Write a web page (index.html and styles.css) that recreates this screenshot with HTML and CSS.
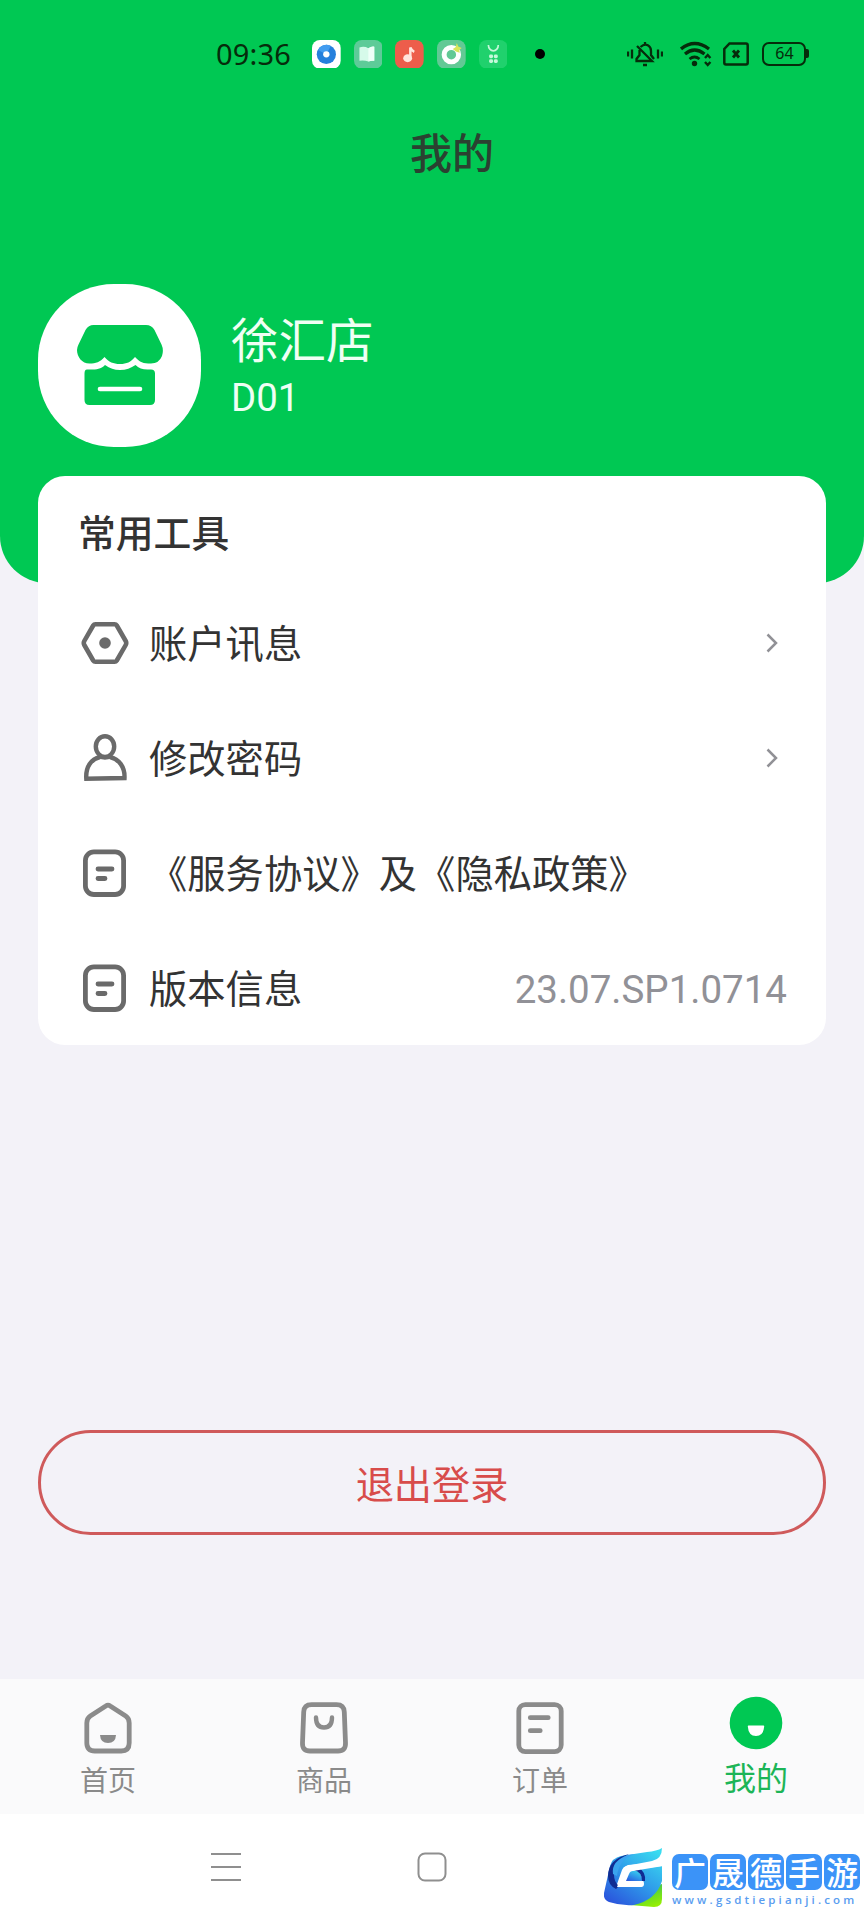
FILE: index.html
```html
<!DOCTYPE html>
<html lang="zh-CN">
<head>
<meta charset="utf-8">
<title>我的</title>
<link rel="stylesheet" href="styles.css">
</head>
<body>
<div class="screen">
  <header class="hero">
    <div class="status">
      <span class="clock">09:36</span>
      <div class="apps">
        <svg class="app" viewBox="0 0 29 29"><rect width="29" height="29" rx="8" fill="#fff"/><circle cx="14.5" cy="14.5" r="9.7" fill="#2580dc"/><path d="M6 10a9.700 9.700 0 0 1 13-4L14.500 14.500z" fill="#429cf0"/><circle cx="14.500" cy="14.500" r="3.200" fill="#fff"/></svg>
        <svg class="app" viewBox="0 0 29 29"><rect width="29" height="29" rx="8" fill="#5ecb98"/><path d="M5.500 7.500q5-1.500 9 .8 3.500-2.300 6-1.600V21q-3-.5-6 .8-4-1.500-9-.8z" fill="#d6faea"/><path d="M14.500 8.300q3.500-2.300 6-1.600V21q-3-.5-6 .8z" fill="#effff8"/></svg>
        <svg class="app" viewBox="0 0 29 29"><rect width="29" height="29" rx="8" fill="#ed5d4b"/><ellipse cx="12.800" cy="18.500" rx="4.500" ry="4" fill="#ffe4dc"/><path d="M15.500 18V7.500q1.500 3.500 4 4.500" fill="none" stroke="#ffe4dc" stroke-width="2.500"/></svg>
        <svg class="app" viewBox="0 0 29 29"><rect width="29" height="29" rx="8" fill="#62c995"/><circle cx="14.500" cy="14.800" r="7.300" fill="none" stroke="#fff" stroke-width="5"/><path d="m20 3 1.500 3.500L25 8l-2.500 2 .5 3-4-1.500-3-2.500 3-2z" fill="#d8e65b"/></svg>
        <svg class="app" viewBox="0 0 29 29"><rect width="29" height="29" rx="8" fill="#20d16d"/><path d="M9.500 5a5 6 0 0 0 10 0" fill="none" stroke="#c5f8da" stroke-width="1.700"/><g fill="#c5f8da"><rect x="10.200" y="14.700" width="4" height="3.800" rx="1.500"/><rect x="15" y="14.700" width="4" height="3.800" rx="1.500"/><rect x="10.200" y="19.400" width="4" height="3.800" rx="1.500"/><rect x="15" y="19.400" width="4" height="3.800" rx="1.500"/></g></svg>
      </div>
      <span class="dot"></span>
      <div class="signals">
        <svg width="36" height="26" viewBox="0 0 36 26" fill="none" stroke="#062c0b" stroke-width="2.300"><path d="M1 10.500v5M5 8.500v9M31 8.500v9M35 10.500v5M13.500 6C19 1 24 5 24 10v4l3 4M18 1v3"/><path d="M10 5l15 15H9.500v-2l3-4V9" /><path d="M16 24h4" stroke-width="2.500"/></svg>
        <svg width="32" height="26" viewBox="0 0 32 26" fill="none" stroke="#062c0b"><path d="M1 8q13.500-11 28 0" stroke-width="3.400"/><path d="M5 13q9.500-8 19.500 0" stroke-width="3.200"/><path d="M9.500 18q5-4 10 0" stroke-width="2.800"/><circle cx="14.500" cy="22.500" r="2.700" fill="#062c0b" stroke="none"/><path d="m25 17 2.700-3 2.700 3M25 21l2.700 3 2.700-3" stroke-width="2.400"/></svg>
        <svg width="26" height="24" viewBox="0 0 26 24" fill="none" stroke="#062c0b" stroke-width="2.500"><path d="M6.500 1.500H23q1.700 0 1.700 1.700v17.600q0 1.700-1.700 1.700H3q-1.700 0-1.700-1.700V7z"/><path d="m10 8.500 6 7m0-7-6 7" stroke-width="2.800"/></svg>
        <div class="battery"><span>64</span></div>
      </div>
    </div>
    <h1 class="title">我的</h1>
    <div class="profile">
      <div class="avatar">
        <svg width="86" height="81" viewBox="0 0 86 81"><path d="M16.500 0H69q5.500 0 8.500 5l7 14.500Q87 25 85 31q-3 7.500-11 7.500c-8 0-11-1-16-6.500-4.500 5-8 7-15 7s-11-2-15.500-7C23 37 19 38.500 12.500 38.500 5 38.500 0 32 0 25q0-2.500 1.500-5.500L8.500 5Q11.500 0 16.500 0Z" fill="#00c853"/><path d="M10 44.500c8 0 13 .5 18-4.500 5 3.500 9 5 15 5s11-2 15.500-5q4.500 4.500 12 4.500h3.500q4 0 4 4V75q0 5-5 5H12.500q-5 0-5-5V48.500q0-4 2.500-4Z" fill="#00c853"/><path d="M23 64h40" stroke="#fff" stroke-width="4.600" stroke-linecap="round"/></svg>
      </div>
      <div class="who"><div class="store">徐汇店</div><div class="code">D01</div></div>
    </div>
  </header>

  <main class="content">
    <section class="card">
      <h2 class="heading">常用工具</h2>
      <div class="row">
        <svg class="icon" viewBox="0 0 48 48" fill="none" stroke="#6a6a6a"><path d="M14.500 5.200h19q1.500 0 2.300 1.300l8.900 15.500q1.100 2 0 4l-8.900 15.500q-.8 1.300-2.300 1.300h-19q-1.500 0-2.300-1.300L3.300 26q-1.100-2 0-4l8.900-15.500q.8-1.300 2.300-1.300Z" stroke-width="4.600"/><circle cx="24" cy="24" r="5.800" fill="#6a6a6a" stroke="none"/></svg>
        <span class="label">账户讯息</span>
        <svg class="chevron" viewBox="0 0 12 20"><path d="m1.500 1.500 8.500 8.500-8.500 8.500" fill="none" stroke="#919196" stroke-width="2.500"/></svg>
      </div>
      <div class="row">
        <svg class="icon" viewBox="0 0 48 48" fill="none" stroke="#6a6a6a" stroke-width="4.400"><ellipse cx="24" cy="12.600" rx="9.200" ry="10.300"/><path d="M19 23.200C10 25 4.500 33 5.300 44.700L43.500 44C44 33 38 25 29 23.200"/><path d="M18 22.500q6 2 12 0"/></svg>
        <span class="label">修改密码</span>
        <svg class="chevron" viewBox="0 0 12 20"><path d="m1.500 1.500 8.500 8.500-8.500 8.500" fill="none" stroke="#919196" stroke-width="2.500"/></svg>
      </div>
      <div class="row">
        <svg class="icon" viewBox="0 0 48 48" fill="none" stroke="#6a6a6a" stroke-width="4.800"><rect x="4.400" y="2.900" width="38.200" height="42.600" rx="8.500"/><path d="M17 20h14M17 29.500h7" stroke-linecap="round"/></svg>
        <span class="label">《服务协议》及《隐私政策》</span>
      </div>
      <div class="row">
        <svg class="icon" viewBox="0 0 48 48" fill="none" stroke="#6a6a6a" stroke-width="4.800"><rect x="4.400" y="2.900" width="38.200" height="42.600" rx="8.500"/><path d="M17 20h14M17 29.500h7" stroke-linecap="round"/></svg>
        <span class="label">版本信息</span>
        <span class="version">23.07.SP1.0714</span>
      </div>
    </section>
    <button class="logout">退出登录</button>
  </main>

  <nav class="tabs">
    <div class="tab">
      <svg width="54" height="54" viewBox="0 0 54 54" fill="none" stroke="#8b8b8b" stroke-width="4.800"><path d="M24.800 4.900q2.200-1.500 4.400 0l15.500 10Q48.200 17.200 48.200 22v20q0 8-8 8H13.800q-8 0-8-8V22q0-4.800 3.500-7.100Z"/><path d="M19 34h16q-.5 8-8 8t-8-8Z" fill="#8b8b8b" stroke="none"/></svg>
      <span>首页</span>
    </div>
    <div class="tab">
      <svg width="54" height="54" viewBox="0 0 54 54" fill="none" stroke="#8b8b8b" stroke-width="4.800"><path d="M14.500 3.600h25q7.500 0 7.800 7.400l1.200 31q.3 8-7.500 8H13q-7.800 0-7.500-8L6.700 11q.3-7.400 7.800-7.400Z"/><path d="M19 16.500q0 10 8 10t8-10" stroke-width="4.400" stroke-linecap="round"/></svg>
      <span>商品</span>
    </div>
    <div class="tab">
      <svg width="54" height="54" viewBox="0 0 54 54" fill="none" stroke="#8b8b8b" stroke-width="4.800"><rect x="5.800" y="3.600" width="42.400" height="47" rx="6.500"/><path d="M17.300 16.700h17.900M17.300 29.700h9.900" stroke-linecap="round"/></svg>
      <span>订单</span>
    </div>
    <div class="tab active">
      <svg width="54" height="54" viewBox="0 0 54 54"><circle cx="27" cy="27" r="26.300" fill="#00c853"/><path d="M19.500 29.500h15q.8 0 .7 1-.7 9.500-8.200 9.500t-8.200-9.500q-.1-1 .7-1Z" fill="#fff"/></svg>
      <span>我的</span>
    </div>
  </nav>

  <footer class="sysbar">
    <svg class="menu" width="30" height="30" viewBox="0 0 30 30" stroke="#8f8f8f" stroke-width="2"><path d="M0 2h30M0 15h30M0 28h30"/></svg>
    <svg class="home" width="30" height="30" viewBox="0 0 30 30"><rect x="1.500" y="1.500" width="27" height="27" rx="6.500" fill="none" stroke="#8f8f8f" stroke-width="2"/></svg>
    <div class="brand">
      <svg class="logo" width="60" height="60" viewBox="0 0 60 60">
        <defs>
          <linearGradient id="blue" x1=".85" y1="0" x2=".15" y2="1"><stop offset="0" stop-color="#3adcf0"/><stop offset=".5" stop-color="#2f9bea"/><stop offset="1" stop-color="#2a53dc"/></linearGradient>
          <linearGradient id="lime" x1=".3" y1="0" x2=".8" y2="1"><stop offset="0" stop-color="#30b46d"/><stop offset=".6" stop-color="#6fe020"/><stop offset="1" stop-color="#9af000"/></linearGradient>
        </defs>
        <path d="M58 36v15q0 8-8 8L26 57 44 40z" fill="url(#lime)"/>
        <path d="M58 0q0 11-10 13L22 18Q19 19 18 22L12 39h24q3 0 3-3 2-9-5-15L58 18v15Q52 52 30 57 17 58 5 54-1 52 0 45L6 18Q8 10 17 8L43 4Q53 3 58 0Z" fill="url(#blue)"/>
        <path d="M25 6Q9 15 10 27q0 7 5 11l-3 3Q4 37 4 28 4 11 25 6Z" fill="#102c93"/>
        <path d="M31 6Q15 11 13 28L9 26Q7 13 24 7Z" fill="#3aa4ef"/>
        <path d="M26 23q-3 1-4 4l-2 6h18q1-7-6-11Z" fill="url(#blue)"/>
        <path d="M30 22q8 2 8 11h3q1-9-6-13Z" fill="#102c93"/>
        <path d="M20 21q1-3 4-4l35-3v4L29 23q-3 0-4 3l-3 7h16q2 0 2 3t-3 3H13Z" fill="#fff"/>
      </svg>
      <div class="brandtext">
        <div class="tiles"><b>广</b><b>晟</b><b>德</b><b>手</b><b>游</b></div>
        <div class="url">www.gsdtiepianji.com</div>
      </div>
    </div>
  </footer>
</div>
</body>
</html>
```
FILE: styles.css
```css
* { box-sizing: border-box; }
body {
  margin: 0;
  background: #f3f2f8;
  color: #333;
  font-family: Roboto, "Noto Sans CJK SC", sans-serif;
}
svg { display: block; flex: none; }
.screen { width: 864px; height: 1920px; display: flex; flex-direction: column; overflow: hidden; }

.hero { flex: none; height: 583px; background: #00c853; border-radius: 0 0 47px 47px; }
.status { height: 108px; padding-left: 216px; display: flex; align-items: center; }
.clock { width: 96px; font: 29px/40px "Noto Sans", sans-serif; letter-spacing: .2px; color: #062c0b; white-space: nowrap; }
.apps { display: flex; gap: 13px; }
.app { width: 28.700px; height: 28.700px; }
.dot { width: 10px; height: 10px; border-radius: 50%; background: #000; margin-left: 28px; }
.signals { display: flex; align-items: center; margin-left: 82px; }
.signals svg:nth-child(2) { margin-left: 17px; }
.signals svg:nth-child(3) { margin-left: 11px; }
.battery { position: relative; width: 44px; height: 24px; margin-left: 13px; border: 2.500px solid #062c0b; border-radius: 7px; font: 16px/19px "Noto Sans", sans-serif; text-align: center; color: #062c0b; }
.battery::after { content: ""; position: absolute; right: -5px; top: 5px; width: 3px; height: 9px; border-radius: 0 2px 2px 0; background: #062c0b; }

.title { margin: 22px 0 0 410px; font-size: 42px; line-height: 50px; font-weight: 500; color: #2b4131; }
.profile { display: flex; align-items: center; margin: 104px 0 0 38px; height: 163px; }
.avatar { width: 163px; height: 163px; border-radius: 76px; background: #fff; display: flex; align-items: center; justify-content: center; }
.who { margin-left: 30px; padding-top: 2px; color: #effff4; }
.store { font-size: 47.500px; line-height: 62px; }
.code { font-size: 38.400px; line-height: 50px; }

.content { flex: 1; margin-top: -107px; padding: 0 38px; display: flex; flex-direction: column; }
.card { height: 569px; padding-top: 30px; border-radius: 27px; background: #fff; }
.heading { margin: 0 0 23px 40px; font-size: 37.800px; line-height: 56px; font-weight: 500; }
.row { height: 115px; padding: 0 39px 0 43px; display: flex; align-items: center; }
.icon { width: 48px; height: 48px; }
.label { margin-left: 20px; padding-top: 5px; font-size: 38.300px; line-height: 56px; white-space: nowrap; }
.chevron { width: 12px; height: 20px; margin: 0 9px 0 auto; }
.version { margin-left: auto; padding-top: 4px; font-size: 38.500px; color: #919197; }
.logout { margin-top: 385px; height: 105px; border: 3px solid #cf5a5b; border-radius: 53px; background: none; color: #d84c4b; font: 38.200px/56px "Noto Sans CJK SC", sans-serif; padding: 0; }

.tabs { flex: none; height: 135px; display: flex; background: #fafafb; }
.tab { flex: 1; display: flex; flex-direction: column; align-items: center; padding-top: 22px; font-size: 28px; line-height: 40px; color: #8a8a8a; }
.tab span { margin-top: 7px; }
.active { padding-top: 17px; font-size: 32px; color: #1cb557; }
.active span { margin-top: 9px; }

.sysbar { flex: none; height: 106px; display: flex; align-items: flex-start; background: #fff; }
.menu { margin: 38px 0 0 211px; }
.home { margin: 38px 0 0 176px; }
.brand { display: flex; margin: 34px 0 0 157px; }
.brandtext { margin: 6px 0 0 8px; }
.tiles { display: flex; gap: 2px; }
.tiles b { width: 36px; height: 36px; border-radius: 7px; background: #3b93f8; color: #fff; font: 500 32px/35px "Noto Sans CJK SC", sans-serif; text-align: center; }
.url { margin-top: 2px; font: 600 11.500px/16px "Open Sans", sans-serif; letter-spacing: 3.150px; color: #5a9df0; white-space: nowrap; }
```
